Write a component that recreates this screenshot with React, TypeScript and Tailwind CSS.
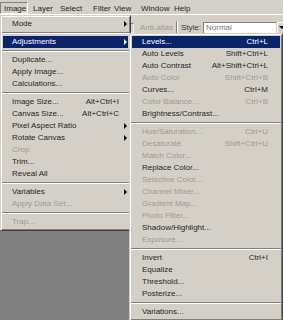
type Item =
  | { label: string; shortcut?: string; off?: boolean; arrow?: boolean; active?: boolean }
  | "sep";

const imageMenu: Item[] = [
  { label: "Mode", arrow: true },
  "sep",
  { label: "Adjustments", arrow: true, active: true },
  "sep",
  { label: "Duplicate..." },
  { label: "Apply Image..." },
  { label: "Calculations..." },
  "sep",
  { label: "Image Size...", shortcut: "Alt+Ctrl+I" },
  { label: "Canvas Size...", shortcut: "Alt+Ctrl+C" },
  { label: "Pixel Aspect Ratio", arrow: true },
  { label: "Rotate Canvas", arrow: true },
  { label: "Crop", off: true },
  { label: "Trim..." },
  { label: "Reveal All" },
  "sep",
  { label: "Variables", arrow: true },
  { label: "Apply Data Set...", off: true },
  "sep",
  { label: "Trap...", off: true },
];

const adjustMenu: Item[] = [
  { label: "Levels...", shortcut: "Ctrl+L", active: true },
  { label: "Auto Levels", shortcut: "Shift+Ctrl+L" },
  { label: "Auto Contrast", shortcut: "Alt+Shift+Ctrl+L" },
  { label: "Auto Color", shortcut: "Shift+Ctrl+B", off: true },
  { label: "Curves...", shortcut: "Ctrl+M" },
  { label: "Color Balance...", shortcut: "Ctrl+B", off: true },
  { label: "Brightness/Contrast..." },
  "sep",
  { label: "Hue/Saturation...", shortcut: "Ctrl+U", off: true },
  { label: "Desaturate", shortcut: "Shift+Ctrl+U", off: true },
  { label: "Match Color...", off: true },
  { label: "Replace Color..." },
  { label: "Selective Color...", off: true },
  { label: "Channel Mixer...", off: true },
  { label: "Gradient Map...", off: true },
  { label: "Photo Filter...", off: true },
  { label: "Shadow/Highlight..." },
  { label: "Exposure...", off: true },
  "sep",
  { label: "Invert", shortcut: "Ctrl+I" },
  { label: "Equalize" },
  { label: "Threshold..." },
  { label: "Posterize..." },
  "sep",
  { label: "Variations..." },
];

const menuBox =
  "absolute bg-[#d4d0c8] border border-t-[#d4d0c8] border-l-[#d4d0c8] border-r-[#404040] border-b-[#404040] shadow-[inset_1px_1px_0_#ffffff,inset_-1px_-1px_0_#808080] py-[2px] pl-[2px] pr-[2px]";

function Separator() {
  return (
    <div className="h-[6px] pt-[2px] -mx-[1px]">
      <div className="border-t border-t-[#808080] border-b border-b-white" />
    </div>
  );
}

function Menu({ items, sub }: { items: Item[]; sub?: boolean }) {
  return (
    <>
      {items.map((it, i) => {
        if (it === "sep") return <Separator key={i} />;
        const color = it.active ? "bg-[#0a246a] text-white" : it.off ? "text-[#9d9a92]" : "text-[#262626]";
        return (
          <div
            key={i}
            className={`flex items-center h-[12px] leading-[12px] ${sub ? "pl-[10px] pr-[12px]" : "pl-[9px]"} ${color}`}
          >
            <span className="flex-1 whitespace-nowrap">{it.label}</span>
            {it.shortcut && <span className="whitespace-nowrap">{it.shortcut}</span>}
            {!sub && (
              <span className="w-[9px] flex justify-end pr-[1px]">
                {it.arrow && (
                  <span
                    className={`w-0 h-0 border-y-[3px] border-y-transparent border-l-[3px] ${
                      it.active ? "border-l-white" : "border-l-black"
                    }`}
                  />
                )}
              </span>
            )}
          </div>
        );
      })}
    </>
  );
}

const menubar = [
  { label: "Layer", w: "w-[27px]" },
  { label: "Select", w: "w-[33px]" },
  { label: "Filter", w: "w-[21px]" },
  { label: "View", w: "w-[27px]" },
  { label: "Window", w: "w-[33px]" },
  { label: "Help", w: "w-[30px]" },
];

export default function App() {
  return (
    <div className="relative w-[283px] h-[320px] overflow-hidden bg-[#808080] font-['Liberation_Sans',Arial,sans-serif] text-[8px] flex flex-col">
      {/* menu bar */}
      <div className="h-[14px] bg-[#d4d0c8] flex items-stretch text-[#262626]">
        <div className="w-[28px] shrink-0 mt-[2px] pl-[3px] leading-[11px] border border-t-[#808080] border-l-[#808080] border-r-white border-b-white">
          Image
        </div>
        {menubar.map((m) => (
          <div key={m.label} className={`${m.w} shrink-0 pl-[5px] leading-[17px] whitespace-nowrap`}>
            {m.label}
          </div>
        ))}
      </div>

      {/* options bar */}
      <div className="h-[26px] bg-[#d4d0c8] border-t border-t-white flex items-center pl-[124px]">
        <div className="w-[10px] h-[10px] shrink-0 border border-t-[#808080] border-l-[#808080] border-r-[#eeeeee] border-b-[#eeeeee] bg-[#d4d0c8]" />
        <span className="w-[42px] shrink-0 pl-[6px] text-[#9d9a92] whitespace-nowrap">Anti-alias</span>
        <div className="w-[2px] h-[14px] shrink-0 border-l border-l-[#808080] border-r border-r-white" />
        <span className="w-[25px] shrink-0 pl-[3px] text-[#333]">Style:</span>
        <div className="w-[74px] h-[12px] shrink-0 bg-white border border-t-[#808080] border-l-[#808080] border-r-[#d4d0c8] border-b-[#d4d0c8] pl-[2px] leading-[10px] text-[#777]">
          Normal
        </div>
        <div className="w-[12px] h-[12px] shrink-0 bg-[#d4d0c8] border border-t-white border-l-white border-r-[#404040] border-b-[#404040] flex items-center pl-[1px]">
          <span className="w-0 h-0 border-x-[3px] border-x-transparent border-t-[3px] border-t-black" />
        </div>
      </div>

      <div className="flex-1 bg-[#808080]" />

      {/* Image menu */}
      <div className={`${menuBox} left-0 top-[15px] w-[131px]`}>
        <Menu items={imageMenu} />
      </div>

      {/* Adjustments submenu */}
      <div className={`${menuBox} left-[129px] top-[33px] w-[154px]`}>
        <Menu items={adjustMenu} sub />
      </div>
    </div>
  );
}
